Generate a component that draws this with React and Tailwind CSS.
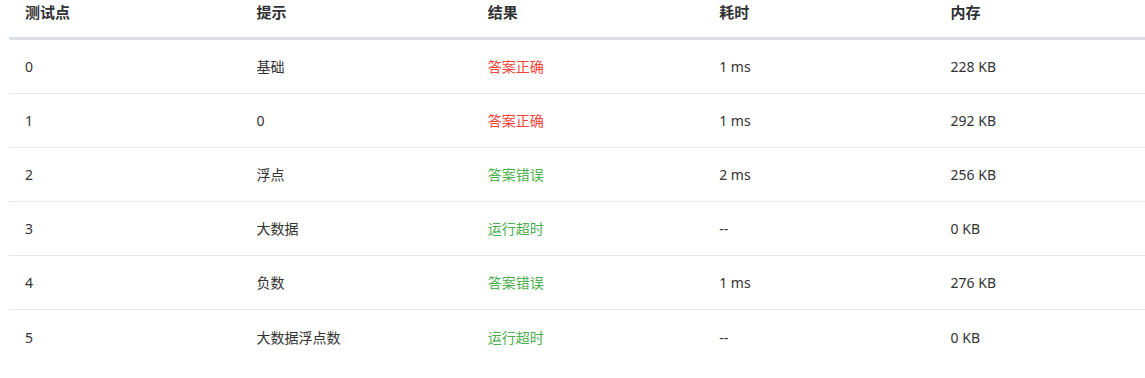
const rows = [
  { id: 0, hint: '基础', result: '答案正确', ok: true, time: '1 ms', mem: '228 KB' },
  { id: 1, hint: '0', result: '答案正确', ok: true, time: '1 ms', mem: '292 KB' },
  { id: 2, hint: '浮点', result: '答案错误', ok: false, time: '2 ms', mem: '256 KB' },
  { id: 3, hint: '大数据', result: '运行超时', ok: false, time: '--', mem: '0 KB' },
  { id: 4, hint: '负数', result: '答案错误', ok: false, time: '1 ms', mem: '276 KB' },
  { id: 5, hint: '大数据浮点数', result: '运行超时', ok: false, time: '--', mem: '0 KB' },
];

const cols = ['测试点', '提示', '结果', '耗时', '内存'];

const App = () => {
  return (
    <div
      className="w-[1145px] h-[378px] overflow-hidden bg-white pl-[9px]"
      style={{ fontFamily: '"Noto Sans", "Noto Sans CJK SC", sans-serif' }}
    >
      <div className="w-[1157px]">
        <div className="grid grid-cols-5 h-[40px] border-b-[3px] border-[#dcdfe6]">
          {cols.map((c) => (
            <div key={c} className="pl-[16px] pt-[1px] text-[15px] leading-[22px] font-bold text-[#303133]">
              {c}
            </div>
          ))}
        </div>
        {rows.map((r, i) => (
          <div
            key={r.id}
            className={`grid grid-cols-5 h-[54px] items-center text-[14px] text-[#333] ${
              i < rows.length - 1 ? 'border-b border-[#e4e7ed]' : ''
            }`}
          >
            <div className="pl-[16px]">{r.id}</div>
            <div className="pl-[16px]">{r.hint}</div>
            <div className={`pl-[16px] ${r.ok ? 'text-[#f44336]' : 'text-[#4caf50]'}`}>{r.result}</div>
            <div className="pl-[16px]">{r.time}</div>
            <div className="pl-[16px]">{r.mem}</div>
          </div>
        ))}
      </div>
    </div>
  );
};

export default App;
